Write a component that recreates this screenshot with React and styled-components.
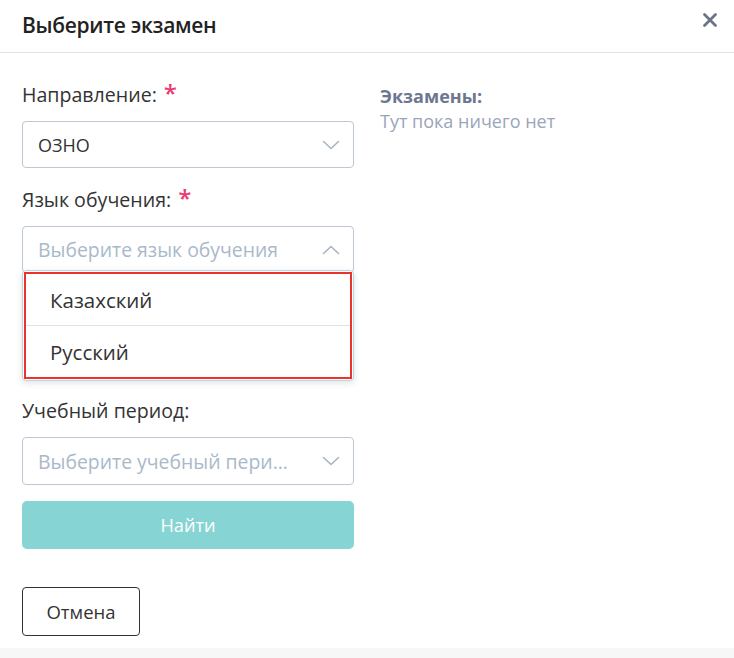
import React from "react";
import styled, { createGlobalStyle } from "styled-components";

const Global = createGlobalStyle`
  html, body { margin: 0; padding: 0; background: #f7f7f7; }
  body { font-family: "Open Sans", "Noto Sans", sans-serif; color: #333; }
  * { box-sizing: border-box; }
`;

const Modal = styled.div`
  width: 734px;
  height: 648px;
  background: #fff;
  display: flex;
  flex-direction: column;
`;

const Header = styled.div`
  height: 53px;
  border-bottom: 1px solid #dfe4ea;
  display: flex;
  align-items: center;
  justify-content: space-between;
  padding: 0 13px 0 22px;
`;

const Title = styled.h2`
  margin: 0 0 2px;
  font-size: 21px;
  font-weight: 600;
  color: #222;
  letter-spacing: -0.3px;
`;

const Close = styled.button`
  border: 0;
  background: none;
  padding: 0;
  width: 22px;
  height: 22px;
  margin-bottom: 12px;
  display: flex;
  align-items: center;
  justify-content: center;
  cursor: pointer;
`;

const Body = styled.div`
  display: flex;
  gap: 26px;
  padding: 30px 22px 0;
`;

const Left = styled.div`
  width: 332px;
  display: flex;
  flex-direction: column;
`;

const Field = styled.div`
  position: relative;
  display: flex;
  flex-direction: column;
  margin-bottom: ${(p) => p.$mb ?? 20}px;
`;

const Label = styled.div`
  font-size: 19.6px;
  line-height: 24px;
  height: 24px;
  color: #333;
  margin-bottom: 14px;
  display: flex;
  align-items: flex-start;
  gap: 7px;
`;

const Star = styled.span`
  color: #ec3a72;
  font-size: 24px;
  line-height: 20px;
  font-weight: 600;
`;

const Anchor = styled.div`
  position: relative;
`;

const Select = styled.div`
  height: ${(p) => p.$h ?? 47}px;
  border: 1px solid #bcc7d3;
  border-radius: 4px;
  display: flex;
  align-items: center;
  justify-content: space-between;
  padding: 0 13px 0 15px;
  background: #fff;
`;

const Value = styled.span`
  font-size: ${(p) => (p.$placeholder ? 19.4 : 18)}px;
  color: ${(p) => (p.$placeholder ? "#a9b9c9" : "#333")};
  white-space: nowrap;
  overflow: hidden;
  text-overflow: ellipsis;
  max-width: 256px;
`;

const Menu = styled.div`
  position: absolute;
  left: 0;
  right: 0;
  top: calc(100% - 3px);
  background: #fff;
  border: 1px solid #c9d2dc;
  border-radius: 4px;
  box-shadow: 0 2px 6px rgba(40, 60, 90, 0.15);
  z-index: 5;
  padding: 1px;
`;

const Highlight = styled.div`
  border: 2px solid #e8332f;
  display: flex;
  flex-direction: column;
`;

const Item = styled.div`
  height: ${(p) => p.$h}px;
  display: flex;
  align-items: center;
  padding-left: 24px;
  font-size: 20.5px;
  color: #333;
  border-bottom: ${(p) => (p.$divider ? "1px solid #dfe4ea" : "none")};
`;

const FindButton = styled.button`
  height: 48px;
  border: 0;
  border-radius: 5px;
  background: #87d4d4;
  color: #fff;
  font-family: inherit;
  font-size: 18.2px;
`;

const CancelButton = styled.button`
  width: 118px;
  height: 49px;
  margin-top: 38px;
  border: 1px solid #333;
  border-radius: 4px;
  background: #fff;
  color: #333;
  font-family: inherit;
  font-size: 18.5px;
`;

const Right = styled.div`
  display: flex;
  flex-direction: column;
  padding-top: 2px;
`;

const SideTitle = styled.div`
  font-size: 18px;
  font-weight: 700;
  color: #6d7792;
  line-height: 22px;
`;

const SideText = styled.div`
  font-size: 18px;
  color: #9aa5ba;
  line-height: 24px;
  margin-top: 2px;
`;

const Chevron = ({ up }) => (
  <svg width="18" height="10" viewBox="0 0 18 10" fill="none">
    <path
      d={up ? "M1.5 8.5L9 1.5L16.5 8.5" : "M1.5 1.5L9 8.5L16.5 1.5"}
      stroke="#a7b4c2"
      strokeWidth="1.6"
      strokeLinecap="round"
      strokeLinejoin="round"
    />
  </svg>
);

export default function App() {
  return (
    <>
      <Global />
      <Modal>
        <Header>
          <Title>Выберите экзамен</Title>
          <Close aria-label="close">
            <svg width="16" height="16" viewBox="0 0 16 16">
              <path d="M2.5 2.5L13.5 13.5M13.5 2.5L2.5 13.5" stroke="#6b7388" strokeWidth="2.8" strokeLinecap="round" />
            </svg>
          </Close>
        </Header>
        <Body>
          <Left>
            <Field>
              <Label>
                Направление: <Star>*</Star>
              </Label>
              <Select>
                <Value>ОЗНО</Value>
                <Chevron />
              </Select>
            </Field>
            <Field>
              <Label>
                Язык обучения: <Star>*</Star>
              </Label>
              <Anchor>
                <Select>
                  <Value $placeholder>Выберите язык обучения</Value>
                  <Chevron up />
                </Select>
                <Menu>
                  <Highlight>
                    <Item $h={52} $divider>Казахский</Item>
                    <Item $h={51}>Русский</Item>
                  </Highlight>
                </Menu>
              </Anchor>
            </Field>
            <Field aria-hidden="true" $mb={21}>
              <Label />
              <Select />
            </Field>
            <Field $mb={16}>
              <Label>Учебный период:</Label>
              <Select $h={48}>
                <Value $placeholder>Выберите учебный период</Value>
                <Chevron />
              </Select>
            </Field>
            <FindButton>Найти</FindButton>
            <div>
              <CancelButton>Отмена</CancelButton>
            </div>
          </Left>
          <Right>
            <SideTitle>Экзамены:</SideTitle>
            <SideText>Тут пока ничего нет</SideText>
          </Right>
        </Body>
      </Modal>
    </>
  );
}
